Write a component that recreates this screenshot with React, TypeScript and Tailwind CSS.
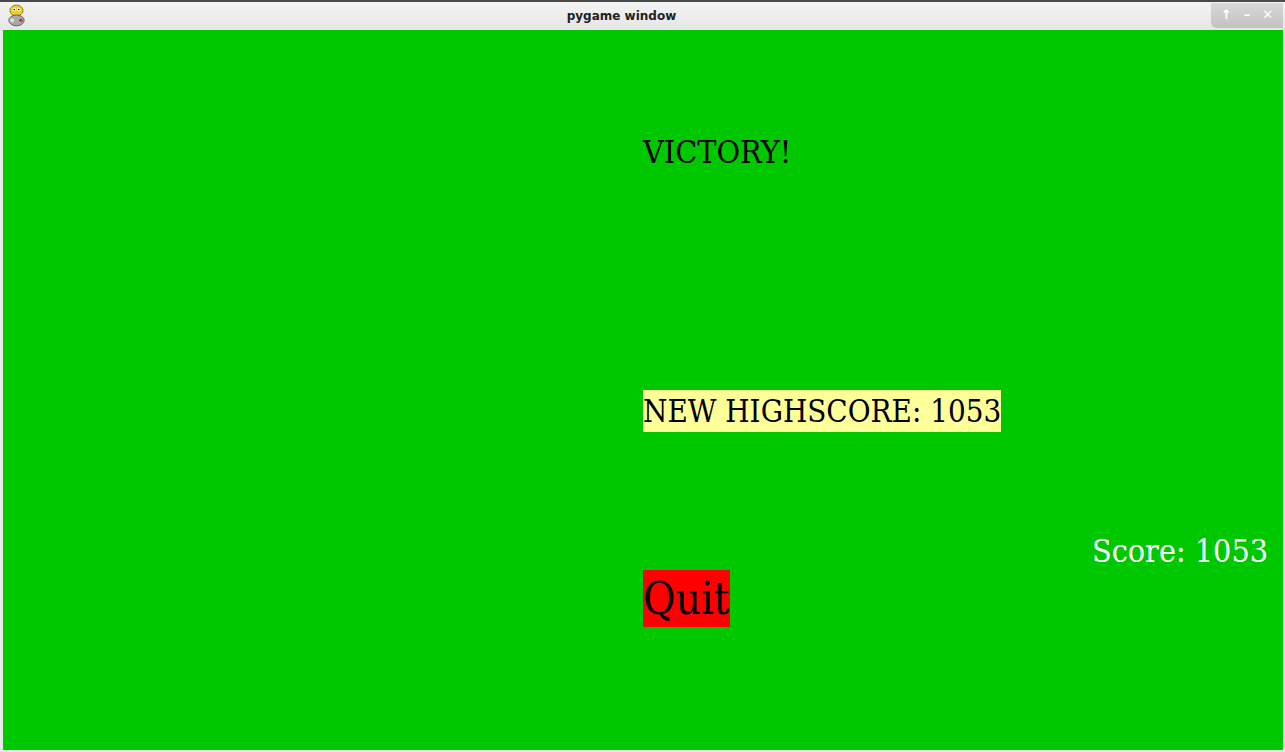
export default function App() {
  return (
    <div className="w-[1285px] h-[752px] flex flex-col bg-[#e9e9e9] overflow-hidden">
      {/* title bar */}
      <div className="h-[30px] shrink-0 border-t-2 border-[#4a4a4a] bg-gradient-to-b from-[#f4f4f4] to-[#e6e6e6] flex items-center relative">
        <div className="ml-[5px] w-[23px] h-[24px]">
          <svg viewBox="0 0 20 22" width="23" height="24">
            <ellipse cx="10" cy="6" rx="6" ry="5" fill="#f0d020" stroke="#8a7010" strokeWidth="0.8" />
            <circle cx="8" cy="5" r="1.6" fill="#fff" />
            <circle cx="12" cy="5" r="1.6" fill="#fff" />
            <circle cx="8" cy="5" r="0.7" fill="#000" />
            <circle cx="12" cy="5" r="0.7" fill="#000" />
            <ellipse cx="10" cy="15" rx="7" ry="5" fill="#a8a8a8" stroke="#555" strokeWidth="0.8" />
            <circle cx="6" cy="15" r="2" fill="#ddd" />
            <circle cx="14" cy="15" r="1.5" fill="#c03030" />
          </svg>
        </div>
        <div className="absolute left-0 right-[42px] text-center font-['DejaVu_Sans',sans-serif] font-bold text-[12px] text-[#222]">
          pygame window
        </div>
        <div className="ml-auto mr-[2px] mt-[-2px] w-[72px] h-[25px] rounded-bl-[6px] bg-gradient-to-b from-[#d8d8d8] to-[#c2c2c2] flex items-center justify-around px-[4px] text-white text-[13px] font-['DejaVu_Sans',sans-serif] font-bold">
          <span>↑</span>
          <span>–</span>
          <span>✕</span>
        </div>
      </div>
      {/* canvas */}
      <div className="flex-1 ml-[3px] mr-[2px] mb-[2px] bg-[#00c800] relative font-['DejaVu_Serif_Condensed','DejaVu_Serif',serif] [font-stretch:condensed]">
        <div className="pl-[640px] pt-[103px] flex flex-col items-start">
          <div className="text-[32px] leading-[38px] text-black">VICTORY!</div>
          <div className="mt-[219px] text-[31px] leading-[42px] bg-[#ffff99] text-black">NEW HIGHSCORE: 1053</div>
          <div className="mt-[138px] text-[44px] leading-[57px] bg-[#ff0000] text-black">Quit</div>
        </div>
        <div className="absolute right-[15px] top-[501px] text-[32px] leading-[40px] text-white">Score: 1053</div>
      </div>
    </div>
  )
}
